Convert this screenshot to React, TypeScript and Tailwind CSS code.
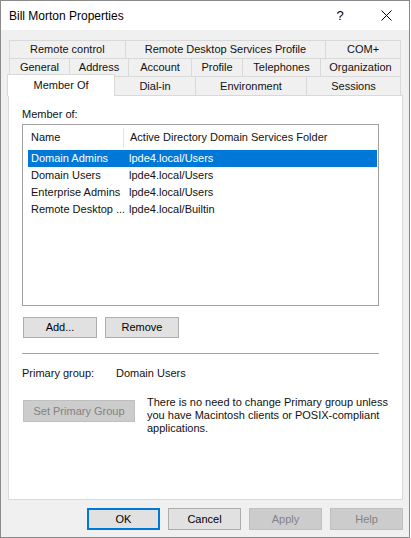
import React from "react";

const tabBase =
  "flex items-center justify-center border-t border-l border-r border-[#d9d9d9] bg-[#f0f0f0] -ml-px first:ml-0 whitespace-nowrap";

function Tab({ w, label }: { w: string; label: string }) {
  return <div className={`${tabBase} ${w} h-full`}>{label}</div>;
}

function Btn({
  w,
  label,
  disabled,
  def,
}: {
  w: string;
  label: string;
  disabled?: boolean;
  def?: boolean;
}) {
  const cls = disabled
    ? "bg-[#cccccc] border border-[#bfbfbf] text-[#838383]"
    : def
    ? "bg-[#e1e1e1] border-2 border-[#0078d7] text-black"
    : "bg-[#e1e1e1] border border-[#adadad] text-black";
  return (
    <div className={`${w} h-full flex items-center justify-center whitespace-nowrap ${cls}`}>
      {label}
    </div>
  );
}

const rows: [string, string, boolean][] = [
  ["Domain Admins", "lpde4.local/Users", true],
  ["Domain Users", "lpde4.local/Users", false],
  ["Enterprise Admins", "lpde4.local/Users", false],
  ["Remote Desktop ...", "lpde4.local/Builtin", false],
];

export default function App() {
  return (
    <div
      className="w-[410px] h-[538px] border border-[#8a8a8a] flex flex-col text-[11px] text-[#111] overflow-hidden"
      style={{ fontFamily: '"Liberation Sans", Arial, sans-serif' }}
    >
      {/* Title bar */}
      <div className="h-[29px] bg-white flex items-center shrink-0">
        <div className="pl-[8px] text-[12px] text-black">Bill Morton Properties</div>
        <div className="ml-auto flex h-full">
          <div className="w-[46px] h-full flex items-center justify-center text-[13px] text-black">
            ?
          </div>
          <div className="w-[46px] h-full flex items-center justify-center">
            <svg width="11" height="11" viewBox="0 0 11 11">
              <path d="M0.5 0.5 L10.5 10.5 M10.5 0.5 L0.5 10.5" stroke="#000" strokeWidth="1" />
            </svg>
          </div>
        </div>
      </div>

      {/* Body */}
      <div className="flex-1 bg-[#f0f0f0] flex flex-col">
        {/* Tabs */}
        <div className="mt-[10px] ml-[8px] w-[392px] flex flex-col">
          <div className="flex h-[18px]">
            <Tab w="w-[117px]" label="Remote control" />
            <Tab w="w-[202px]" label="Remote Desktop Services Profile" />
            <Tab w="w-[76px]" label="COM+" />
          </div>
          <div className="flex h-[18px]">
            <Tab w="w-[61px]" label="General" />
            <Tab w="w-[60px]" label="Address" />
            <Tab w="w-[64px]" label="Account" />
            <Tab w="w-[52px]" label="Profile" />
            <Tab w="w-[79px]" label="Telephones" />
            <Tab w="w-[81px]" label="Organization" />
          </div>
          <div className="flex h-[19px] -ml-[2px]">
            <div className="relative z-10 w-[108px] h-[22px] -mt-[2px] bg-white border-t border-l border-r border-[#d9d9d9] flex items-start justify-center pt-[2px]">
              Member Of
            </div>
            <div className={`${tabBase} w-[82px] h-full`}>Dial-in</div>
            <div className={`${tabBase} w-[112px] h-full`}>Environment</div>
            <div className={`${tabBase} w-[95px] h-full`}>Sessions</div>
          </div>
        </div>

        {/* Panel */}
        <div className="ml-[7px] w-[395px] h-[405px] bg-white border border-[#d9d9d9] flex flex-col px-[13px]">
          <div className="mt-[11px] h-[15px] leading-[15px]">Member of:</div>

          {/* List */}
          <div className="mt-[2px] w-[357px] h-[182px] border border-[#a0a0a0] flex flex-col">
            <div className="h-[25px] flex items-center shrink-0">
              <div className="w-[101px] h-[20px] pl-[8px] flex items-center border-r border-[#e5e5e5]">
                Name
              </div>
              <div className="pl-[6px] whitespace-nowrap">Active Directory Domain Services Folder</div>
            </div>
            {rows.map(([n, f, sel]) => (
              <div
                key={n}
                className={`ml-[5px] mr-[1px] h-[17px] flex items-center ${
                  sel ? "bg-[#0078d7] text-white" : ""
                }`}
              >
                <div className="w-[101px] pl-[3px] whitespace-nowrap">{n}</div>
                <div className="whitespace-nowrap">{f}</div>
              </div>
            ))}
          </div>

          {/* Add / Remove */}
          <div className="mt-[11px] ml-[1px] h-[21px] flex gap-[8px]">
            <Btn w="w-[74px]" label="Add..." />
            <Btn w="w-[74px]" label="Remove" />
          </div>

          <div className="mt-[15px] w-[357px] border-t border-[#a0a0a0]" />

          <div className="mt-[12px] h-[15px] leading-[15px] flex">
            <div className="w-[94px]">Primary group:</div>
            <div>Domain Users</div>
          </div>

          <div className="mt-[15px] flex items-start">
            <div className="mt-[4px] ml-[1px] h-[22px] flex">
              <Btn w="w-[112px]" label="Set Primary Group" disabled />
            </div>
            <div className="ml-[12px] leading-[13px] whitespace-nowrap">
              There is no need to change Primary group unless
              <br />
              you have Macintosh clients or POSIX-compliant
              <br />
              applications.
            </div>
          </div>
        </div>

        {/* Bottom buttons */}
        <div className="mt-[8px] ml-[86px] h-[22px] flex gap-[8px]">
          <Btn w="w-[73px]" label="OK" def />
          <Btn w="w-[73px]" label="Cancel" />
          <Btn w="w-[73px]" label="Apply" disabled />
          <Btn w="w-[73px]" label="Help" disabled />
        </div>
      </div>
    </div>
  );
}
